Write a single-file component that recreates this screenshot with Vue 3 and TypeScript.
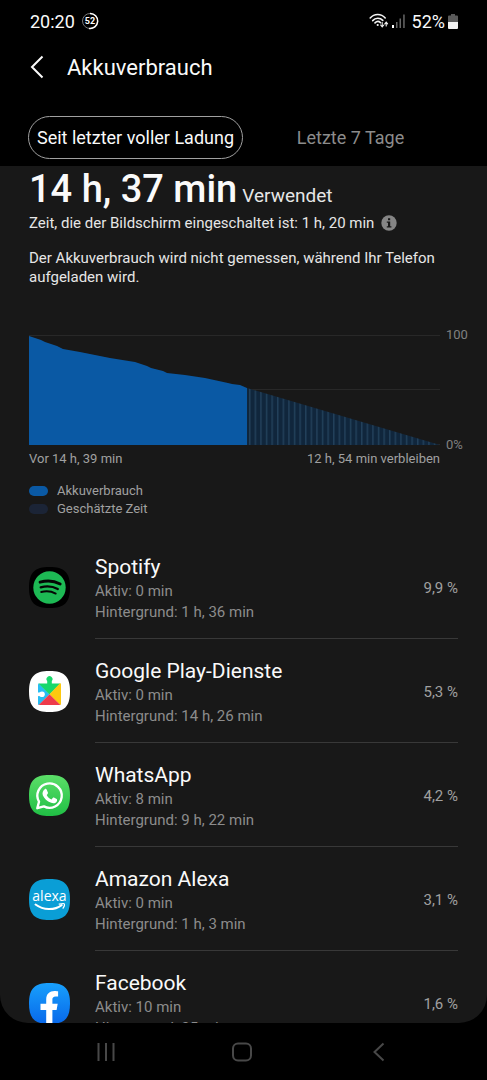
<script setup lang="ts">
import { ref } from 'vue'

interface AppUsage {
  id: string
  name: string
  active: string
  background: string
  share: string
}

const tabs: string[] = ['Seit letzter voller Ladung', 'Letzte 7 Tage']
const activeTab = ref<number>(0)

const apps: AppUsage[] = [
  { id: 'spotify', name: 'Spotify', active: '0 min', background: '1 h, 36 min', share: '9,9 %' },
  { id: 'play', name: 'Google Play-Dienste', active: '0 min', background: '14 h, 26 min', share: '5,3 %' },
  { id: 'whatsapp', name: 'WhatsApp', active: '8 min', background: '9 h, 22 min', share: '4,2 %' },
  { id: 'alexa', name: 'Amazon Alexa', active: '0 min', background: '1 h, 3 min', share: '3,1 %' },
  { id: 'facebook', name: 'Facebook', active: '10 min', background: '35 min', share: '1,6 %' },
]

// Battery level samples in chart units (411 wide, 110 high, y grows downwards)
const levels: [number, number][] = [
  [0, 1], [12, 5], [16, 7], [28, 11], [34, 14], [51, 17], [66, 20], [81, 23], [106, 27],
  [118, 31], [122, 33], [134, 36], [138, 38], [156, 40], [176, 43], [199, 48], [203, 49],
  [211, 50], [218, 53],
]
const usedArea = `0,110 ${levels.map((p) => p.join(',')).join(' ')} 218,110`
const squircle =
  'M20.5 0C35.500 0 41 5.500 41 20.500S35.500 41 20.500 41 0 35.500 0 20.500 5.500 0 20.500 0Z'
</script>

<template>
  <div class="phone">
    <div class="status">
      <span class="time">20:20</span>
      <svg class="ring" width="18" height="18" viewBox="0 0 18 18" aria-hidden="true">
        <circle cx="9" cy="9" r="7.500" fill="none" stroke="#777" stroke-width="1" />
        <path d="M9 1.500a7.500 7.500 0 1 1-1 14.900" fill="none" stroke="#fff" stroke-width="1.500" />
        <text x="9" y="12.200" text-anchor="middle" class="ring-text">52</text>
      </svg>
      <span class="grow"></span>
      <svg class="wifi" width="20" height="16" viewBox="0 0 20 16" fill="none" stroke="#f4f4f4" stroke-width="1.600" stroke-linecap="round" aria-hidden="true">
        <path d="M1.200 5C5.200.300 12.200.300 16.200 5" />
        <path d="M3.700 7.600C6.500 4.500 11 4.500 13.800 7.400" />
        <path d="M6 9.900c1.600-1.600 3.900-1.700 5.500-.300" />
        <circle cx="8.700" cy="12" r="1.100" fill="#f4f4f4" stroke="none" />
        <path d="M13.200 9.500v4M11.600 12l1.600 1.800L14.800 12M17.200 13V9.500M15.800 10.800l1.400-1.600 1.400 1.600" stroke-width="1.100" />
      </svg>
      <svg class="signal" width="14" height="14" viewBox="0 0 14 14" aria-hidden="true">
        <path d="M0 11h2v3H0z" fill="#fff" />
        <path d="M4 8h1.500v6H4zM7.500 4.500H9V14H7.500zM11.200.500h1.500V14h-1.500z" fill="#666" />
      </svg>
      <span class="percent">52%</span>
      <svg class="battery" width="10" height="15" viewBox="0 0 10 15" aria-hidden="true">
        <path d="M3 0h4v1.500h2q1 0 1 1V8H0V2.500q0-1 1-1h2z" fill="#5a5a5a" />
        <path d="M0 8h10v6q0 1-1 1H1q-1 0-1-1z" fill="#f2f2f2" />
      </svg>
    </div>

    <header class="bar">
      <button class="back" type="button" aria-label="Zurück">
        <svg width="14" height="24" viewBox="0 0 14 24" fill="none" stroke="#fafafa" stroke-width="2">
          <path d="M12.500 1.500 2 12l10.500 10.500" />
        </svg>
      </button>
      <h1>Akkuverbrauch</h1>
    </header>

    <div class="tabs" role="tablist">
      <button
        v-for="(tab, i) in tabs"
        :key="tab"
        type="button"
        role="tab"
        class="tab"
        :class="{ selected: i === activeTab }"
        :aria-selected="i === activeTab"
        @click="activeTab = i"
      >{{ tab }}</button>
    </div>

    <main class="content">
      <section class="summary">
        <p class="total"><strong>14 h, 37 min</strong><span>Verwendet</span></p>
        <p class="screen">
          Zeit, die der Bildschirm eingeschaltet ist: 1 h, 20 min
          <button class="info" type="button" aria-label="Info">
            <svg width="16" height="16" viewBox="0 0 16 16">
              <circle cx="8" cy="8" r="7.700" fill="#858585" />
              <path d="M7 3.300h2.200v2H7zM5.800 6.500h3.400v4.700h1.200v1.300H5.800v-1.300H7V7.800H5.800z" fill="#181818" />
            </svg>
          </button>
        </p>
        <p class="note">Der Akkuverbrauch wird nicht gemessen, während Ihr Telefon aufgeladen wird.</p>
      </section>

      <section class="chart">
        <div class="plot">
          <svg viewBox="0 0 411 110" preserveAspectRatio="none" role="img" aria-label="Akkuverbrauch">
            <defs>
              <pattern id="stripes" x="220" width="5.600" height="110" patternUnits="userSpaceOnUse">
                <rect width="5.600" height="110" fill="#10263c" />
                <rect width="1.500" height="110" fill="#22405a" />
              </pattern>
            </defs>
            <path d="M0 .500h411M0 54.500h411M0 109.500h411" stroke="#282828" />
            <polygon points="218,53 411,110 218,110" fill="url(#stripes)" />
            <polygon :points="usedArea" fill="#0a59a4" />
          </svg>
          <div class="axis"><span>100</span><span>0%</span></div>
        </div>
        <div class="range"><span>Vor 14 h, 39 min</span><span>12 h, 54 min verbleiben</span></div>
        <ul class="legend">
          <li><i class="used"></i>Akkuverbrauch</li>
          <li><i class="estimated"></i>Geschätzte Zeit</li>
        </ul>
      </section>

      <ul class="apps">
        <li v-for="app in apps" :key="app.id">
          <button class="app" type="button">
            <svg class="icon" width="41" height="41" viewBox="0 0 41 41" aria-hidden="true">
              <template v-if="app.id === 'spotify'">
                <path :d="squircle" fill="#000" />
                <circle cx="20.500" cy="20.500" r="16.200" fill="#1db954" />
                <path d="M11 15.200c7-2 14.600-1.200 20.200 1.800" fill="none" stroke="#050505" stroke-width="2.800" stroke-linecap="round" />
                <path d="M11.700 20.300c6-1.600 12.300-.900 17.100 1.700" fill="none" stroke="#050505" stroke-width="2.300" stroke-linecap="round" />
                <path d="M12.200 25c5.200-1.300 10.300-.700 14.500 1.600" fill="none" stroke="#050505" stroke-width="1.900" stroke-linecap="round" />
              </template>
              <template v-else-if="app.id === 'play'">
                <path :d="squircle" fill="#fff" />
                <path d="M10 12.500 20.500 23.200 10 34q-1 0-1-1V13.500q0-1 1-1z" fill="#28bdf3" />
                <path d="M9.500 12.500h8.700V10a3 3 0 1 1 4.600 0v2.500h8.700L20.500 23.500z" fill="#18d86b" />
                <path d="M31 12.200q1 0 1 1V33q0 1-1 1L20.500 23.200z" fill="#fdc90f" />
                <path d="M20.500 23.200 31.300 34H9.700z" fill="#ee3b4b" />
                <circle cx="13" cy="23.300" r="2.800" fill="#fff" />
                <path d="M8.800 21.500h3.500v3.600H8.800z" fill="#fff" />
              </template>
              <template v-else-if="app.id === 'whatsapp'">
                <defs>
                  <linearGradient id="wa" x2="0" y2="1"><stop stop-color="#5cde68" /><stop offset="1" stop-color="#20bf45" /></linearGradient>
                </defs>
                <path :d="squircle" fill="url(#wa)" />
                <path d="M8.300 33.200 10 26.700a12.200 12.200 0 1 1 4.900 4.700z" fill="none" stroke="#fff" stroke-width="2.400" stroke-linejoin="round" />
                <path d="M15.700 14.200c.600-.500 1.500-.500 1.900.200l1.300 3c.300.700-.100 1.200-1.200 2.500 1 2 2.600 3.500 4.900 4.500 1.200-1.500 1.600-2.100 2.300-1.800l2.800 1.400c.700.300.500 2-.200 2.900-1.200 1.300-3.200 1.700-5.300.900-4.200-1.500-7.100-4.300-8.400-7.600-.700-2.200 0-4.700 1.900-6z" fill="#fff" />
              </template>
              <template v-else-if="app.id === 'alexa'">
                <path :d="squircle" fill="#0a9ed6" />
                <text x="20.500" y="22" text-anchor="middle" class="alexa-text">alexa</text>
                <path d="M6.500 25.500c8 6 19 6 26.200.600" fill="none" stroke="#fff" stroke-width="2" stroke-linecap="round" />
                <path d="M30.200 25.200c3-.800 5-.800 5.200-.300.300.700-.300 2.700-1.300 4.200" fill="none" stroke="#fff" stroke-width="1.300" stroke-linecap="round" />
              </template>
              <template v-else>
                <defs>
                  <linearGradient id="fb" x2="0" y2="1"><stop stop-color="#18a0fc" /><stop offset="1" stop-color="#0868ea" /></linearGradient>
                </defs>
                <path :d="squircle" fill="url(#fb)" />
                <path d="M17.200 41V27h-5.700v-6.200h5.700v-4.300c0-5.700 3.300-8.600 8.400-8.600 1.700 0 3.500.300 3.500.300v5.300h-2.400c-2.500 0-3.300 1.400-3.300 3v4.300h5.300L27.600 27h-4.200v14q-3 .300-6.200 0z" fill="#fff" />
              </template>
            </svg>
            <span class="row">
              <span class="text">
                <span class="name">{{ app.name }}</span>
                <span class="detail">Aktiv: {{ app.active }}</span>
                <span class="detail">Hintergrund: {{ app.background }}</span>
              </span>
              <span class="share">{{ app.share }}</span>
            </span>
          </button>
        </li>
      </ul>
    </main>

    <nav class="nav">
      <button type="button" aria-label="Letzte Apps">
        <svg width="20" height="20" viewBox="0 0 20 20"><path d="M2.500 1v18M10 1v18M17.500 1v18" stroke="#484848" stroke-width="2" /></svg>
      </button>
      <button type="button" aria-label="Startbildschirm">
        <svg width="20" height="20" viewBox="0 0 20 20"><rect x="1" y="1.500" width="18" height="17" rx="5" fill="none" stroke="#484848" stroke-width="2" /></svg>
      </button>
      <button type="button" aria-label="Zurück">
        <svg width="20" height="20" viewBox="0 0 20 20"><path d="M14.500 1.500 5.500 10l9 8.500" fill="none" stroke="#484848" stroke-width="2" /></svg>
      </button>
    </nav>
  </div>
</template>

<style>
html,
body {
  background: #000;
}
</style>

<style scoped>
.phone {
  display: flex;
  flex-direction: column;
  height: 100vh;
  background: #000;
  color: #fafafa;
  font-family: Roboto, "Liberation Sans", sans-serif;
}
h1,
p,
ul {
  margin: 0;
  padding: 0;
  list-style: none;
}
button {
  padding: 0;
  border: 0;
  background: none;
  color: inherit;
  font: inherit;
}
svg {
  display: block;
  flex: none;
}
.status {
  display: flex;
  align-items: center;
  height: 42px;
  padding: 0 29px 0 30px;
  font-size: 18px;
}
.ring {
  margin-left: 6px;
}
.ring-text {
  fill: #fff;
  font-size: 9px;
  font-weight: 700;
}
.grow {
  flex: 1;
}
.signal {
  margin: 0 6px 0 3px;
}
.battery {
  margin-left: 3px;
}
.bar {
  display: flex;
  align-items: center;
  gap: 23px;
  height: 50px;
  padding: 0 30px;
}
h1 {
  font-size: 22px;
  font-weight: 400;
}
.tabs {
  display: flex;
  padding: 24px 29px 7px 28px;
}
.tab {
  flex: 1;
  height: 43px;
  border: 1px solid transparent;
  border-radius: 22px;
  color: #8c8c8c;
  font-size: 18px;
  white-space: nowrap;
}
.tab.selected {
  border-color: #a0a0a0;
  color: #fafafa;
}
.content {
  flex: 1;
  min-height: 0;
  overflow: hidden;
  border-radius: 0 0 28px 28px;
  background: #181818;
}
.summary {
  padding: 0 29px;
  font-size: 15px;
  line-height: 19px;
  color: #e6e6e6;
}
.total {
  display: flex;
  align-items: baseline;
  gap: 5px;
  font-size: 19px;
}
.total strong {
  color: #fafafa;
  font-size: 38px;
  font-weight: 500;
  line-height: 46px;
}
.screen {
  display: flex;
  align-items: center;
  gap: 7px;
  height: 22px;
}
.note {
  padding-top: 15px;
}
.chart {
  padding: 48px 19px 0 29px;
  color: #a0a0a0;
  font-size: 13px;
}
.plot {
  display: flex;
}
.plot svg {
  flex: 1;
  min-width: 0;
  height: 110px;
}
.axis {
  display: flex;
  flex-direction: column;
  justify-content: space-between;
  width: 28px;
  margin: -8px 0;
  padding-left: 6px;
  box-sizing: border-box;
  line-height: 16px;
  color: #808080;
}
.range {
  display: flex;
  justify-content: space-between;
  padding: 4px 28px 0 0;
  line-height: 20px;
}
.legend {
  padding-top: 13px;
  line-height: 18px;
}
.legend li {
  display: flex;
  align-items: center;
  gap: 9px;
}
.legend i {
  width: 19px;
  height: 10px;
  border-radius: 5px;
}
.used {
  background: #0a59a4;
}
.estimated {
  background: #1b2436;
}
.apps {
  padding: 17px 29px 0;
}
.app {
  display: flex;
  align-items: center;
  gap: 25px;
  width: 100%;
  text-align: left;
}
.row {
  display: flex;
  flex: 1;
  align-items: center;
  justify-content: space-between;
  padding: 18px 0 15px;
  border-bottom: 1px solid #383838;
}
.text {
  display: flex;
  flex-direction: column;
}
.name {
  font-size: 21px;
  line-height: 28px;
}
.detail {
  color: #8c8c8c;
  font-size: 15px;
  line-height: 21px;
}
.share {
  color: #a0a0a0;
  font-size: 15px;
}
.alexa-text {
  fill: #fff;
  font-family: "Open Sans", "Noto Sans", sans-serif;
  font-size: 14px;
}
.nav {
  display: flex;
  align-items: center;
  justify-content: space-around;
  height: 57px;
  padding: 0 40px 0 38px;
}
</style>
